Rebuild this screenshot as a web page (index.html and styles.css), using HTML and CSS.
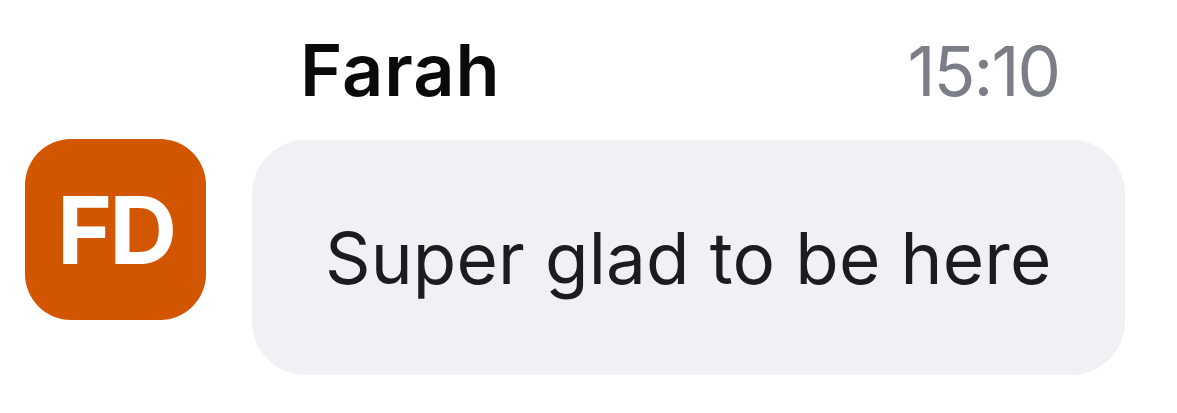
FILE: index.html
```html
<!DOCTYPE html>
<html lang="en">
<head>
<meta charset="utf-8">
<title>Message</title>
<link rel="stylesheet" href="styles.css">
</head>
<body>
<div class="msg">
  <div class="header">
    <span class="name">Farah</span>
    <span class="time">15:10</span>
  </div>
  <div class="avatar">FD</div>
  <div class="bubble">Super glad to be here</div>
</div>
</body>
</html>
```

FILE: styles.css
```css
html, body {
  margin: 0;
  padding: 0;
  background: #ffffff;
}
body {
  font-family: Inter, "Liberation Sans", Arial, sans-serif;
  width: 1177px;
  height: 413px;
  overflow: hidden;
}
.msg {
  display: grid;
  grid-template-columns: 181px 873px;
  column-gap: 46px;
  padding-left: 25px;
}
.header {
  grid-column: 2;
  grid-row: 1;
  display: flex;
  justify-content: space-between;
  align-items: baseline;
  padding: 34px 66px 34px 48px;
}
.name {
  font-size: 72px;
  line-height: 1;
  font-weight: 600;
  color: #0a0a0a;
  letter-spacing: 1px;
}
.time {
  font-size: 69px;
  line-height: 1;
  color: #7b7e86;
  letter-spacing: -2px;
}
.avatar {
  grid-column: 1;
  grid-row: 2;
  width: 181px;
  height: 181px;
  margin-top: -1px;
  border-radius: 46px;
  background: #d25500;
  color: #ffffff;
  font-weight: 700;
  font-size: 94px;
  letter-spacing: -3px;
  display: flex;
  align-items: center;
  justify-content: center;
}
.bubble {
  grid-column: 2;
  grid-row: 2;
  box-sizing: border-box;
  height: 235px;
  padding: 83px 70px 80px 73px;
  border-radius: 54px;
  background: #f0f0f5;
  color: #1c1c1e;
  font-size: 71px;
  line-height: 1;
  letter-spacing: 0.15px;
  white-space: nowrap;
}
```
